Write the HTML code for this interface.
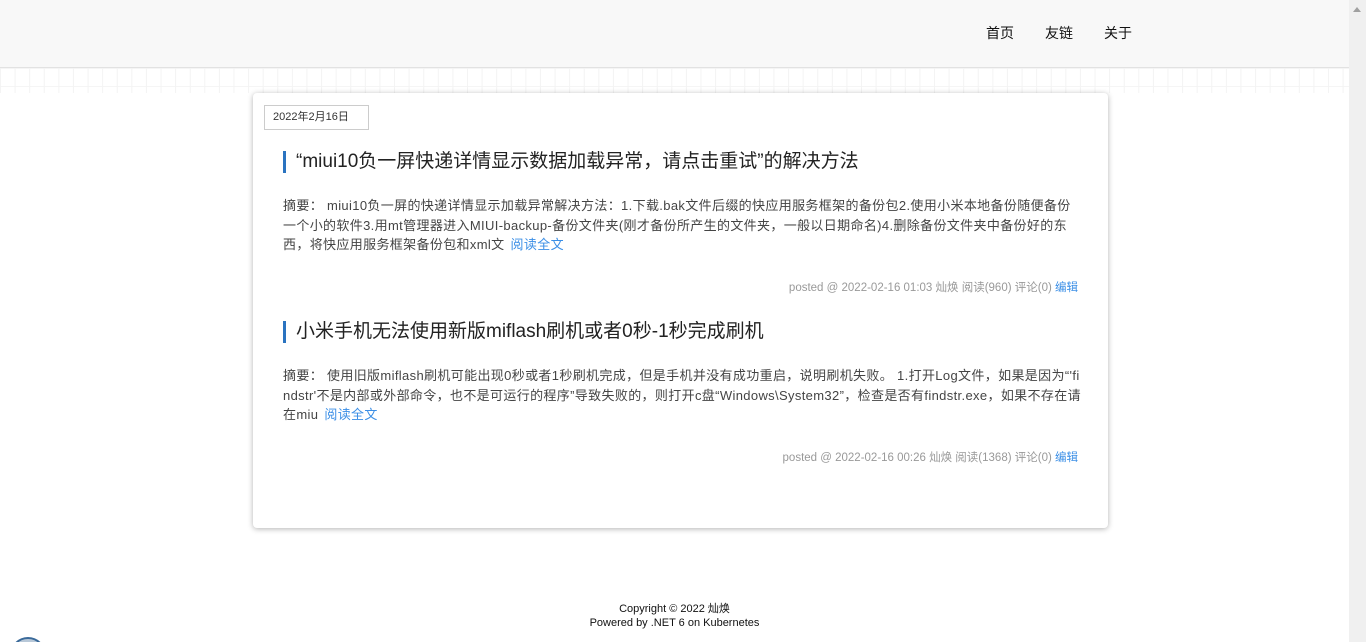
<!DOCTYPE html>
<html><head><meta charset="utf-8"><style>
*{margin:0;padding:0;box-sizing:border-box}
html,body{width:1366px;height:642px;overflow:hidden}
body{background:#fff;font-family:"Liberation Sans","Noto Sans CJK SC",sans-serif;position:relative}
.hdr{position:absolute;left:0;top:0;width:1349px;height:68px;background:#f8f8f8;border-bottom:1px solid #e2e2e2}
.nav{position:absolute;top:23px;font-size:14px;color:#111}
.grid{position:absolute;left:0;top:68px;width:1349px;height:25px;background-image:linear-gradient(90deg,#f3f3f3 1px,transparent 1px),linear-gradient(#f5f5f5 1px,transparent 1px);background-size:14.6px 100%,100% 18px}
.sb{position:absolute;right:0;top:0;width:17px;height:642px;background:#f0f0f0}
.sb:after{content:"";position:absolute;left:4px;top:7px;border:4px solid transparent;border-bottom:5px solid #a0a0a0;border-top:0}
.card{position:absolute;left:253px;top:93px;width:855px;height:435px;background:#fff;border-radius:4px;box-shadow:0 1px 6px rgba(0,0,0,.3)}
.date{position:absolute;left:11px;top:12px;width:105px;height:25px;border:1px solid #ccc;font-size:11px;color:#333;line-height:23px;padding-left:8px}
.t{position:absolute;left:30px;font-size:19px;color:#222;border-left:3px solid #2a73c0;padding-left:10px;line-height:22px;height:22px;white-space:nowrap}
.s{position:absolute;left:30px;font-size:13px;color:#444;line-height:19.5px;white-space:nowrap}
.s a{color:#3a8ee6;margin-left:6px}
.m{position:absolute;right:30px;font-size:11.5px;color:#999}
.m a{color:#3a8ee6}
.ft{position:absolute;left:0;width:1349px;text-align:center;font-size:11px;color:#111}
</style></head><body>
<div class="hdr"><span class="nav" style="left:986px">首页</span><span class="nav" style="left:1045px">友链</span><span class="nav" style="left:1104px">关于</span></div>
<div class="grid"></div>
<div class="card">
<div class="date">2022年2月16日</div>
<div class="t" style="top:58px">“miui10负一屏快递详情显示数据加载异常，请点击重试”的解决方法</div>
<div class="s" style="top:103px;letter-spacing:0.35px">摘要： miui10负一屏的快递详情显示加载异常解决方法：1.下载.bak文件后缀的快应用服务框架的备份包2.使用小米本地备份随便备份<br>一个小的软件3.用mt管理器进入MIUI-backup-备份文件夹(刚才备份所产生的文件夹，一般以日期命名)4.删除备份文件夹中备份好的东<br>西，将快应用服务框架备份包和xml文<a>阅读全文</a></div>
<div class="m" style="top:186px">posted @ 2022-02-16 01:03 灿焕 阅读(960) 评论(0) <a>编辑</a></div>
<div class="t" style="top:228px">小米手机无法使用新版miflash刷机或者0秒-1秒完成刷机</div>
<div class="s" style="top:273px;letter-spacing:0.35px">摘要： 使用旧版miflash刷机可能出现0秒或者1秒刷机完成，但是手机并没有成功重启，说明刷机失败。 1.打开Log文件，如果是因为“'fi<br>ndstr'不是内部或外部命令，也不是可运行的程序”导致失败的，则打开c盘“Windows\System32”，检查是否有findstr.exe，如果不存在请<br>在miu<a>阅读全文</a></div>
<div class="m" style="top:356px">posted @ 2022-02-16 00:26 灿焕 阅读(1368) 评论(0) <a>编辑</a></div>
</div>
<div class="ft" style="top:600px">Copyright © 2022 灿焕</div>
<div class="ft" style="top:617px">Powered by .NET 6 on Kubernetes</div>
<div style="position:absolute;left:10px;top:637px;width:36px;height:36px;border-radius:50%;border:2px solid #3a6a9a;background:#b8c8d8"></div>
<div class="sb"></div>
</body></html>
